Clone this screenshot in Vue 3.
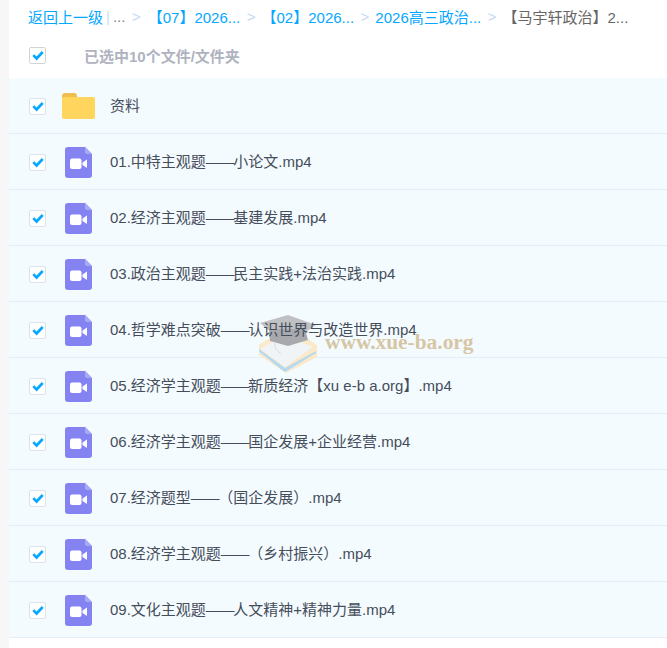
<script setup>
const files = [
  '01.中特主观题——小论文.mp4',
  '02.经济主观题——基建发展.mp4',
  '03.政治主观题——民主实践+法治实践.mp4',
  '04.哲学难点突破——认识世界与改造世界.mp4',
  '05.经济学主观题——新质经济【xu e-b a.org】.mp4',
  '06.经济学主观题——国企发展+企业经营.mp4',
  '07.经济题型——（国企发展）.mp4',
  '08.经济学主观题——（乡村振兴）.mp4',
  '09.文化主观题——人文精神+精神力量.mp4',
].map((name) => name.split('——'))
const crumbs = ['【07】2026...', '【02】2026...', '2026高三政治...']
</script>

<template>
  <div class="page">
    <div class="panel">
      <nav class="crumbs">
        <a class="link">返回上一级</a>
        <span class="bar">|</span>
        <span class="dots">...</span>
        <template v-for="c in crumbs" :key="c">
          <span class="sep">&gt;</span>
          <a class="link">{{ c }}</a>
        </template>
        <span class="sep">&gt;</span>
        <span class="current">【马宇轩政治】2...</span>
      </nav>
      <div class="selectbar">
        <span class="check head">
          <svg viewBox="0 0 16 16" class="tick"><path d="M2.6 8.2 6.4 12 13.4 4.6" /></svg>
        </span>
        <span class="count">已选中10个文件/文件夹</span>
      </div>
      <ul class="list">
        <li class="row">
          <span class="check">
            <svg viewBox="0 0 16 16" class="tick"><path d="M2.6 8.2 6.4 12 13.4 4.6" /></svg>
          </span>
          <svg class="icon folder" viewBox="0 0 33 26">
            <path d="M0 3a3 3 0 0 1 3-3h9a3 3 0 0 1 3 3v2H0z" fill="#f0bd4f" />
            <path d="M0 6a2 2 0 0 1 2-2h29a2 2 0 0 1 2 2v18a2 2 0 0 1-2 2H2a2 2 0 0 1-2-2z" fill="#ffd55e" />
          </svg>
          <span class="name">资料</span>
        </li>
        <li v-for="f in files" :key="f[0]" class="row">
          <span class="check">
            <svg viewBox="0 0 16 16" class="tick"><path d="M2.6 8.2 6.4 12 13.4 4.6" /></svg>
          </span>
          <svg class="icon video" viewBox="0 0 27 31">
            <path d="M3 0h17l7 7v21a3 3 0 0 1-3 3H3a3 3 0 0 1-3-3V3a3 3 0 0 1 3-3z" fill="#8583f2" />
            <path d="M20 0l7 7h-5a2 2 0 0 1-2-2z" fill="#a9a8f6" />
            <rect x="5" y="11.500" width="11.500" height="10.500" rx="2" fill="#fff" />
            <path d="M17.500 15.500 22 12.500v8.500l-4.500-3z" fill="#fff" />
          </svg>
          <span class="name">{{ f[0] }}<span class="dash">——</span>{{ f[1] }}</span>
        </li>
      </ul>
      <div class="mark">
        <svg class="mark-art" viewBox="0 0 60 58">
          <path d="M1 30 10 24H50L59 30V42L28 58 1 40z" fill="#fbe9c8" />
          <path d="M2 34 26 20 55 32 27 52z" fill="#f1f4f7" />
          <path d="M1 34 27 53 58 36v2L27 57 24 55 1 36.500z" fill="#b4daf2" />
          <path d="M2 8 30 0 58 10 46 18H14z" fill="#bfc0c3" />
          <path d="M11 14H47L50 25 30 31 12 26z" fill="#a8a9ad" />
          <path d="M17 27v6l6 6" fill="none" stroke="#dadada" stroke-width="1" />
        </svg>
        <span class="mark-text">www.xue-ba.org</span>
      </div>
    </div>
  </div>
</template>

<style>
html, body { margin: 0; background: #f7f7f7; }
</style>

<style scoped>
.page {
  width: 667px;
  height: 648px;
  overflow: hidden;
  padding-left: 9px;
  box-sizing: border-box;
  font-family: "Liberation Sans", "Noto Sans CJK SC", sans-serif;
  font-size: 15px;
}
.panel { position: relative; background: #fff; height: 648px; }
.crumbs {
  display: flex;
  align-items: center;
  height: 32px;
  padding-left: 19px;
  white-space: nowrap;
  color: #06a7ff;
}
.link { color: #06a7ff; }
.bar { color: #c6dff5; margin: 0 3px; }
.dots { color: #818999; }
.sep {
  color: #c4d8f4;
  margin: 0 6px 0 6.500px;
}
.dots + .sep { margin-right: 7px; }
.current { color: #666; }
.selectbar {
  display: flex;
  align-items: center;
  height: 46px;
  padding-left: 20px;
}
.count {
  margin-left: 38px;
  font-weight: 700;
  color: #afb3bf;
}
.list { list-style: none; margin: 0; padding: 0; }
.row {
  display: flex;
  align-items: center;
  height: 55px;
  background: #f4fbff;
  border-bottom: 1px solid #e4eefa;
  padding-left: 20px;
}
.check {
  flex: none;
  width: 15px;
  height: 15px;
  margin-top: 1px;
  border: 1px solid #dde3ec;
  border-radius: 2px;
  background: #fff;
  display: flex;
  align-items: center;
  justify-content: center;
}
.check.head { border-color: #d3d3d6; margin-top: 0; }
.tick { width: 14px; height: 14px; fill: none; stroke: #06a7ff; stroke-width: 3; }
.icon { flex: none; }
.folder { width: 33px; height: 26px; margin-left: 16px; margin-top: 1px; }
.video { width: 27px; height: 31px; margin-left: 19px; margin-right: 3px; margin-top: 2px; }
.name { position: relative; z-index: 2; top: -1px; margin-left: 15px; color: #454d5a; white-space: nowrap; }
.dash { letter-spacing: -1.250px; }
.mark {
  position: absolute;
  z-index: 1;
  left: 249px;
  top: 315px;
  display: flex;
  align-items: center;
  pointer-events: none;
}
.mark-art { width: 60px; height: 58px; }
.mark-text {
  margin-left: 7px;
  margin-top: -4px;
  font-family: "Liberation Serif", serif;
  font-weight: 700;
  font-size: 21.400px;
  color: #d6c6a4;
}
</style>
